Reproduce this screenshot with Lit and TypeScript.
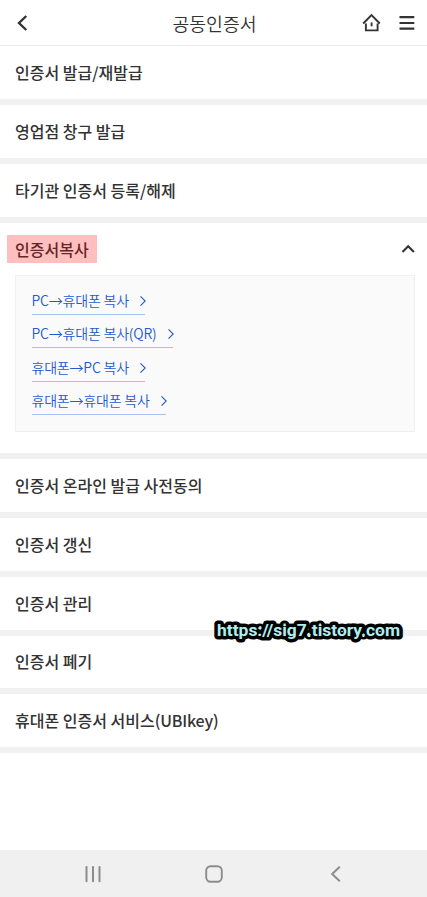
import { LitElement, html, css, svg } from "lit";
import { customElement } from "lit/decorators.js";
import { styleMap } from "lit/directives/style-map.js";

const BEFORE = ["인증서 발급/재발급", "영업점 창구 발급", "타기관 인증서 등록/해제"];
const AFTER = ["인증서 온라인 발급 사전동의", "인증서 갱신", "인증서 관리", "인증서 폐기"];
const LINKS = [
  { text: "PC→휴대폰 복사", width: 113.5 },
  { text: "PC→휴대폰 복사(QR)", width: 141 },
  { text: "휴대폰→PC 복사", width: 113.5 },
  { text: "휴대폰→휴대폰 복사", width: 134 },
];

@customElement("app-root")
export class AppRoot extends LitElement {
  static styles = css`
    :host {
      display: flex;
      flex-direction: column;
      position: relative;
      width: 100%;
      height: 897px;
      overflow: hidden;
      background: #fff;
      color: #333;
      font-family: "Noto Sans CJK KR", sans-serif;
    }
    * { box-sizing: border-box; }
    svg { display: block; flex: none; fill: none; }
    header {
      display: grid;
      grid-template-columns: 85px 1fr 85px;
      align-items: center;
      height: 46px;
      flex: none;
      border-bottom: 1px solid #e8e8e8;
    }
    h1 {
      margin: 0;
      font-size: 18.3px;
      line-height: 26px;
      font-weight: 350;
      text-align: center;
      white-space: nowrap;
      padding-left: 2px;
    }
    .back { padding-left: 15px; }
    .actions { display: flex; align-items: center; gap: 18.5px; padding-left: 19.5px; }
    main { flex: 1; }
    .row {
      display: flex;
      align-items: center;
      justify-content: space-between;
      height: 58.75px;
      padding: 0 12px 1px 15px;
      border-bottom: 6.25px solid #f1f1f1;
      font-size: 16px;
      font-weight: 500;
      line-height: 24px;
      white-space: nowrap;
    }
    .row:first-child { height: 59.25px; }
    .latin { letter-spacing: -0.2px; }
    .open { height: 236.5px; border-bottom: 6.25px solid #f1f1f1; }
    .open .row { height: 52.5px; border: 0; padding-left: 6.5px; }
    .mark {
      background: #ffbfbf;
      color: #662626;
      height: 28px;
      line-height: 28px;
      padding: 0 8px 0 8.5px;
    }
    .panel {
      display: flex;
      flex-direction: column;
      align-items: flex-start;
      gap: 8.4px;
      margin: 0 12px 0 15px;
      height: 157px;
      padding: 13.5px 15.5px;
      background: #fafafa;
      border: 1px solid #f0f0f0;
    }
    .link {
      display: flex;
      align-items: center;
      justify-content: space-between;
      height: 25px;
      padding-bottom: 4px;
      border-bottom: 1px solid #a9c1f2;
      color: #1f5bcf;
      font-size: 14px;
      line-height: 20px;
      font-weight: 350;
      letter-spacing: -0.2px;
      white-space: nowrap;
    }
    .link svg { margin: 2px -2px 0 0; }
    .watermark {
      position: absolute;
      left: 209px;
      top: 614px;
      overflow: visible;
    }
    .watermark text {
      font-family: Roboto, sans-serif;
      font-weight: 700;
      font-size: 17px;
      fill: #aeeeee;
      stroke: #000;
      stroke-width: 7px;
      stroke-linejoin: round;
      paint-order: stroke;
    }
    nav {
      display: grid;
      grid-template-columns: repeat(3, 121.5px);
      justify-content: center;
      justify-items: center;
      align-items: center;
      height: 47.5px;
      flex: none;
      padding: 1px 0 0 1px;
      background: #f0f0f0;
    }
  `;

  private row(label: string) {
    return html`<div class="row"><span>${label}</span></div>`;
  }

  private icon(w: number, h: number, color: string, stroke: number, body: unknown) {
    return html`<svg width=${w} height=${h} viewBox="0 0 ${w} ${h}" stroke=${color} stroke-width=${stroke}>${body}</svg>`;
  }

  render() {
    return html`
      <header>
        <div class="back">${this.icon(14, 18, "#333", 2.4, svg`<path d="M11.3 2 L4 9 L11.3 16"/>`)}</div>
        <h1>공동인증서</h1>
        <div class="actions">
          ${this.icon(19, 20, "#333", 1.9, svg`<path d="M1.2 10.5 L9.5 2.2 L17.8 10.5 M3.9 10.5 V17.4 H15.6 V10.5 M9.6 9.5 V13.3"/>`)}
          ${this.icon(16, 18, "#333", 2.2, svg`<path d="M0.5 3.2 H15.3 M0.5 9 H15.3 M0.5 14.7 H15.3"/>`)}
        </div>
      </header>
      <main>
        ${BEFORE.map((t) => this.row(t))}
        <section class="open">
          <div class="row">
            <span class="mark">인증서복사</span>
            ${this.icon(14, 10, "#333", 2.1, svg`<path d="M1.5 8 L7.2 2.3 L12.9 8"/>`)}
          </div>
          <div class="panel">
            ${LINKS.map((l) => html`
              <div class="link" style=${styleMap({ width: `${l.width}px` })}>
                <span>${l.text}</span>
                ${this.icon(8, 12, "#1f5bcf", 1.1, svg`<path d="M1.5 1.3 L6.2 6 L1.5 10.7"/>`)}
              </div>`)}
          </div>
        </section>
        ${AFTER.map((t) => this.row(t))}
        <div class="row"><span>휴대폰 인증서 서비스<span class="latin">(UBIkey)</span></span></div>
      </main>
      <nav>
        ${this.icon(18, 18, "#8c8c8c", 2, svg`<path stroke-linecap="round" d="M2.5 2 V16.2 M9 2 V16.2 M15.5 2 V16.2"/>`)}
        ${this.icon(18, 18, "#8c8c8c", 1.9, svg`<rect x="1.2" y="1.2" width="15.6" height="15.6" rx="4.5"/>`)}
        ${this.icon(12, 18, "#8c8c8c", 2, svg`<path d="M9.8 1.8 L2.2 9 L9.8 16.2"/>`)}
      </nav>
      <svg class="watermark" width="200" height="36" viewBox="0 0 200 36">
        <text x="8" y="22" textLength="183" lengthAdjust="spacingAndGlyphs">https://sig7.tistory.com</text>
      </svg>
    `;
  }
}
